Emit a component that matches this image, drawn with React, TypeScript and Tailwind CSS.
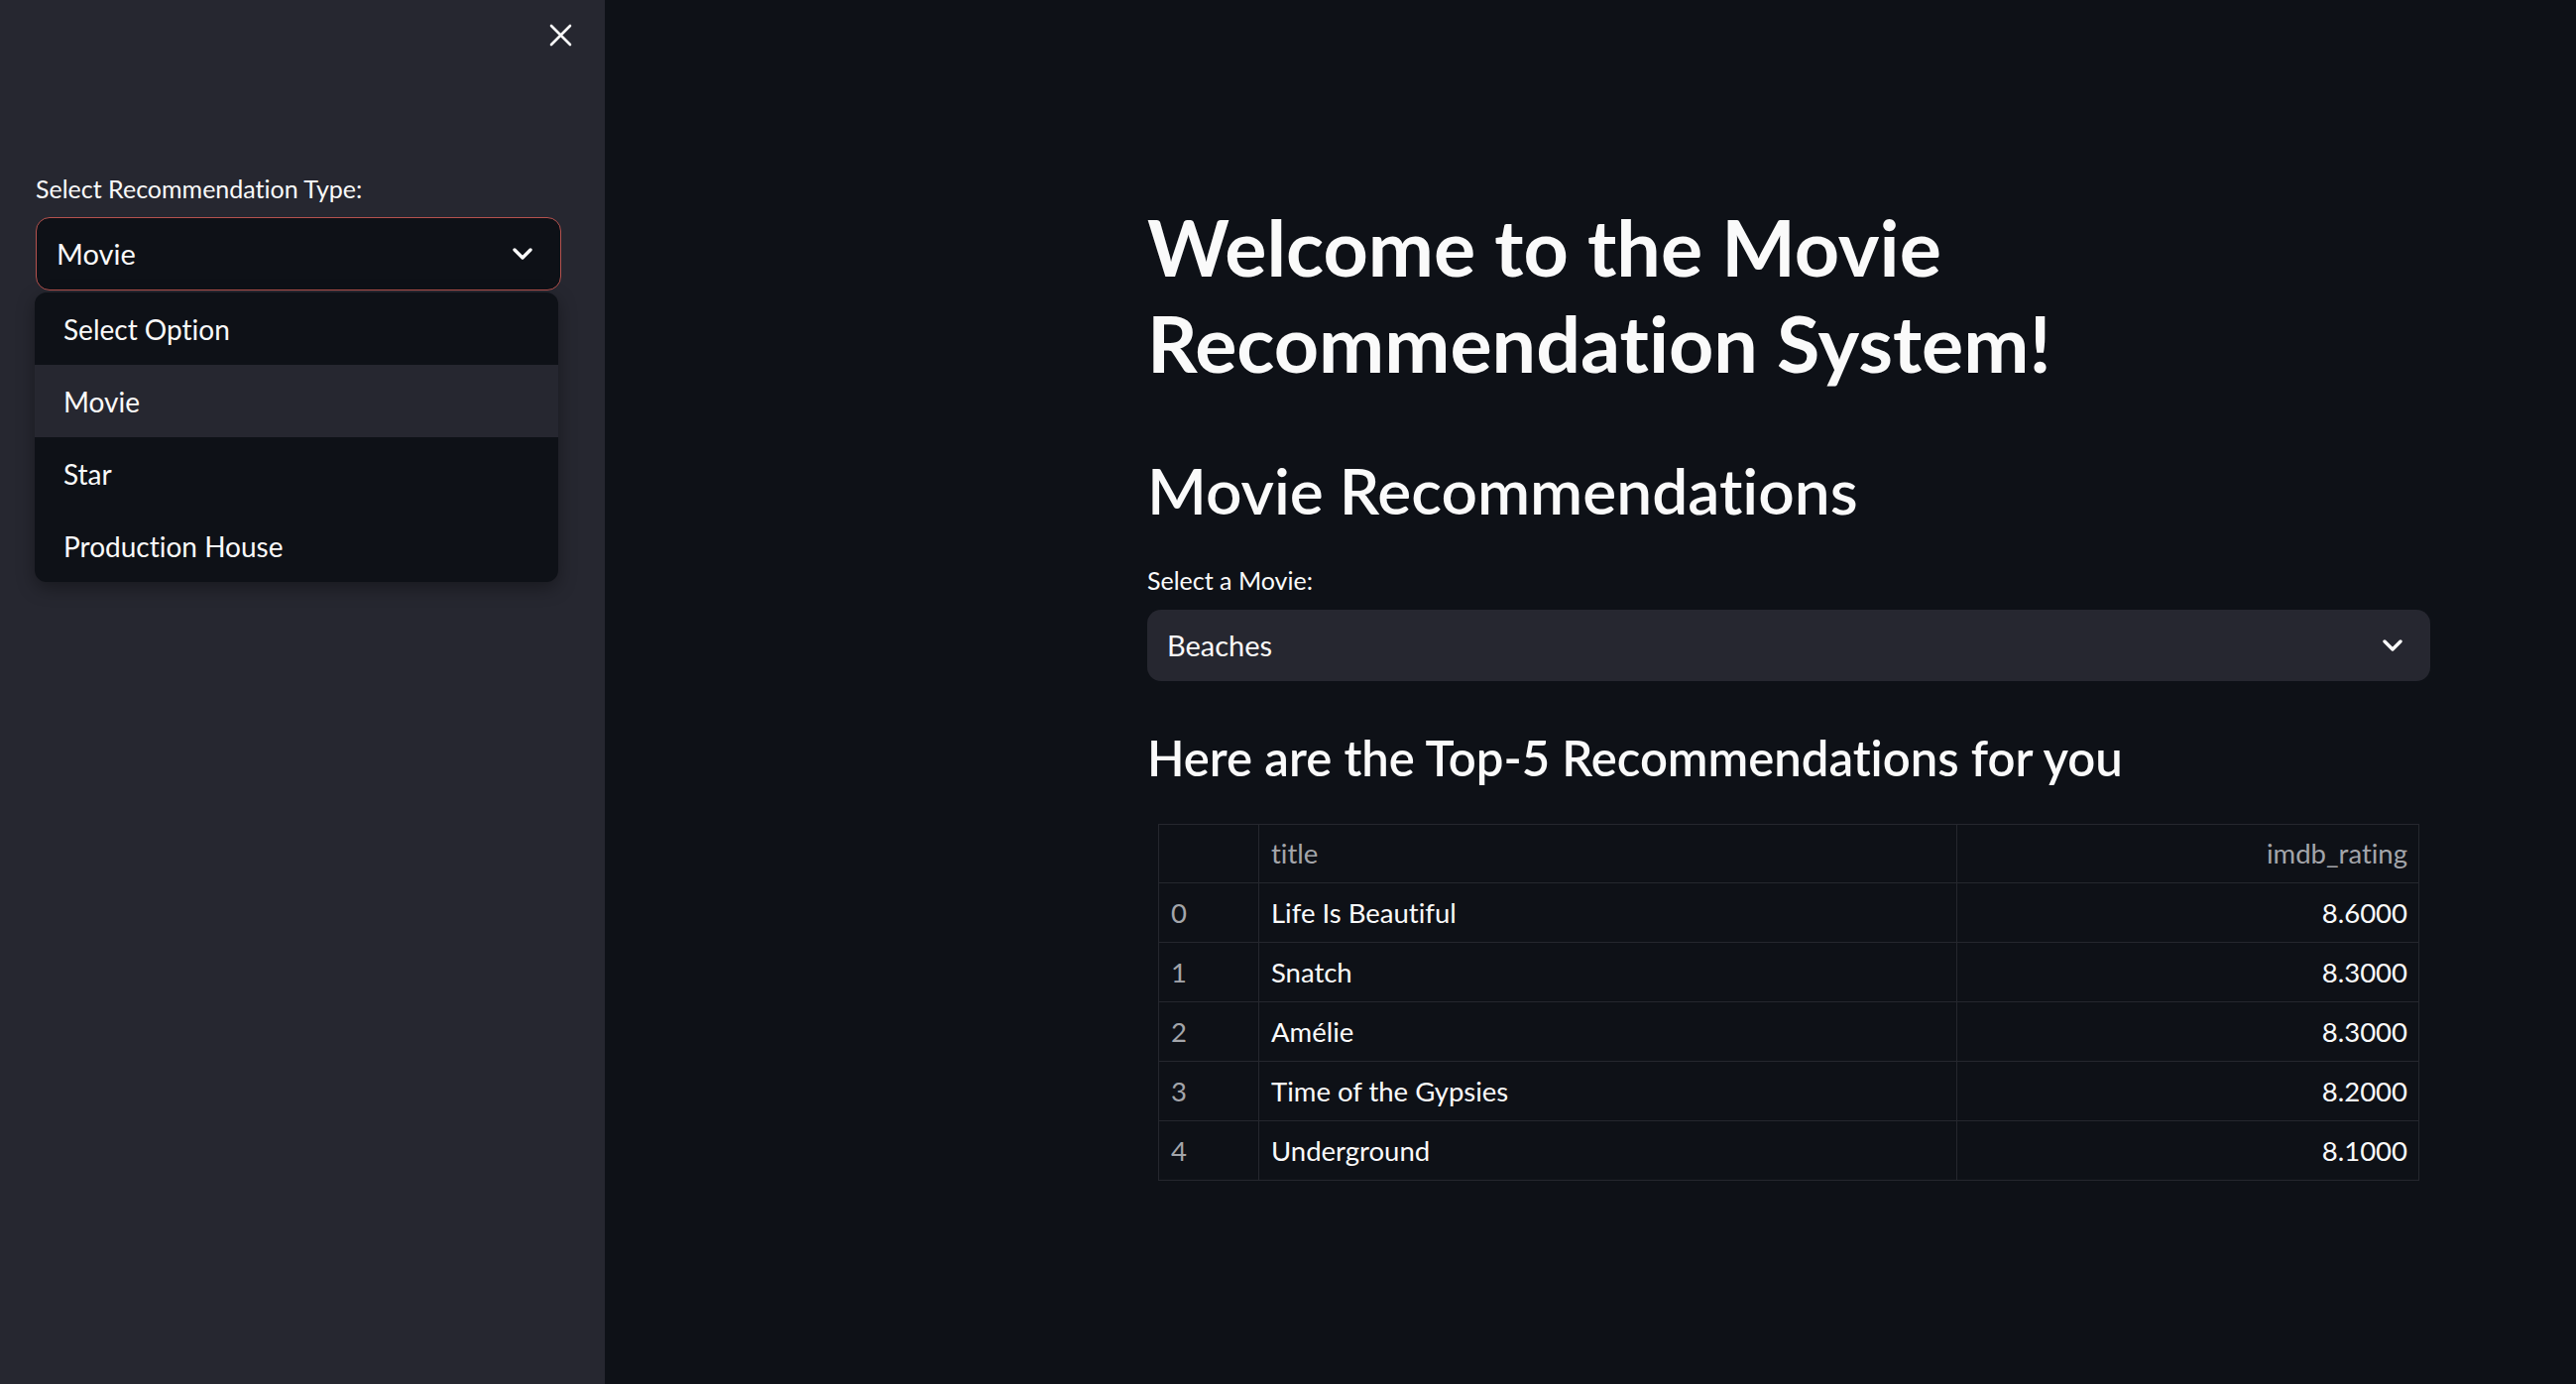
const font = "font-['Lato','Noto_Sans',sans-serif] [font-variant-ligatures:none]";

const rows = [
  { i: 0, title: "Life Is Beautiful", rating: "8.6000" },
  { i: 1, title: "Snatch", rating: "8.3000" },
  { i: 2, title: "Amélie", rating: "8.3000" },
  { i: 3, title: "Time of the Gypsies", rating: "8.2000" },
  { i: 4, title: "Underground", rating: "8.1000" },
];

const options = ["Select Option", "Movie", "Star", "Production House"];

function Chevron() {
  return (
    <svg width="20" height="13" viewBox="0 0 20 13" fill="none">
      <path d="M2 2l8 8 8-8" stroke="#fafafa" strokeWidth="3.4" strokeLinecap="round" strokeLinejoin="round" />
    </svg>
  );
}

function Sidebar() {
  return (
    <aside className="flex w-[610px] shrink-0 flex-col bg-[#262730]">
      <div className="flex h-[70px] items-center justify-end pr-[33px]">
        <svg width="23" height="23" viewBox="0 0 23 23" fill="none">
          <path d="M2 2l19 19M21 2L2 21" stroke="#fafafa" strokeWidth="2.6" strokeLinecap="round" />
        </svg>
      </div>

      <div className="px-[36px] pt-[104px]">
        <p className="mb-[13px] text-[25px] leading-[32px] text-[#fafafa]">Select Recommendation Type:</p>

        <div className="relative">
          <div className="flex h-[74px] w-[530px] items-center justify-between rounded-[14px] border border-[#b5524e] bg-[#0e1117] pl-[20px] pr-[28px]">
            <span className="text-[29px] text-[#fafafa]">Movie</span>
            <Chevron />
          </div>

          <ul className="absolute left-[-1px] top-full mt-[2px] w-[528px] overflow-hidden rounded-[12px] bg-[#0e1117] shadow-[0_6px_18px_rgba(0,0,0,0.35)]">
            {options.map((o) => (
              <li
                key={o}
                className={`flex h-[73px] items-center px-[29px] text-[28px] text-[#fafafa] ${o === "Movie" ? "bg-[#262730]" : ""}`}
              >
                {o}
              </li>
            ))}
          </ul>
        </div>
      </div>
    </aside>
  );
}

export default function App() {
  return (
    <div className={`flex h-screen w-full overflow-hidden bg-[#0e1117] ${font}`}>
      <Sidebar />

      <main className="flex-1 pl-[547px]">
        <div className="w-[1294px] pt-[200px]">
          <h1 className="text-[79px] font-bold leading-[97px] text-[#fafafa]">
            Welcome to the Movie
            <br />
            Recommendation System!
          </h1>

          <h2 className="mt-[62px] text-[64px] font-semibold leading-[78px] text-[#fafafa]">Movie Recommendations</h2>

          <p className="mt-[35px] text-[25px] leading-[32px] text-[#fafafa]">Select a Movie:</p>
          <div className="mt-[14px] flex h-[72px] items-center justify-between rounded-[14px] bg-[#262730] pl-[20px] pr-[28px]">
            <span className="text-[29px] text-[#fafafa]">Beaches</span>
            <Chevron />
          </div>

          <h3 className="mt-[47px] text-[49px] font-semibold leading-[60px] text-[#fafafa]">
            Here are the Top-5 Recommendations for you
          </h3>

          <table className="ml-[11px] mt-[37px] w-[1272px] border-collapse text-[27.5px]">
            <thead>
              <tr className="h-[59px]">
                <th className="w-[101px] border border-[#25272e]"></th>
                <th className="w-[704px] border border-[#25272e] px-[12px] text-left font-normal text-[#a3a5aa]">title</th>
                <th className="border border-[#25272e] px-[11px] text-right font-normal text-[#a3a5aa]">imdb_rating</th>
              </tr>
            </thead>
            <tbody>
              {rows.map((r) => (
                <tr key={r.i} className="h-[60px]">
                  <td className="border border-[#25272e] px-[12px] text-[#a3a5aa]">{r.i}</td>
                  <td className="border border-[#25272e] px-[12px] text-[#fafafa]">{r.title}</td>
                  <td className="border border-[#25272e] px-[11px] text-right text-[#fafafa]">{r.rating}</td>
                </tr>
              ))}
            </tbody>
          </table>
        </div>
      </main>
    </div>
  );
}
